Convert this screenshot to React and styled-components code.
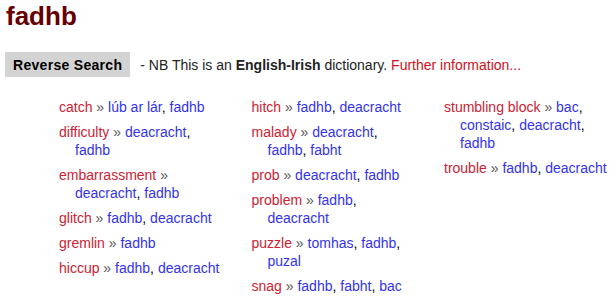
import React from "react";
import styled, { createGlobalStyle } from "styled-components";

const Global = createGlobalStyle`
  html, body { margin: 0; padding: 0; background: #fff; }
  body { font-family: "Liberation Sans", Arial, sans-serif; color: #000; }
`;

const Page = styled.div`
  padding: 0 6px;
`;

const Title = styled.h1`
  margin: 0;
  padding-top: 1px;
  font-size: 26px;
  line-height: 30px;
  font-weight: bold;
  color: #660000;
`;

const Bar = styled.div`
  display: flex;
  align-items: center;
  margin-top: 21px;
  margin-left: -1px;
  font-size: 14px;
`;

const Button = styled.button`
  font-family: "Liberation Sans", Arial, sans-serif;
  font-weight: bold;
  font-size: 14px;
  letter-spacing: 0.3px;
  background: #d3d3d3;
  color: #000;
  border: none;
  height: 25px;
  padding: 0 8px;
  margin-right: 10px;
`;

const Info = styled.span`
  color: #222;
`;

const InfoLink = styled.a`
  color: #cc1122;
  text-decoration: none;
`;

const Columns = styled.div`
  display: grid;
  grid-template-columns: repeat(3, 168px);
  column-gap: 24.5px;
  margin-top: 21px;
  margin-left: 53px;
  font-size: 14px;
  line-height: 18px;
`;

const List = styled.ul`
  list-style: none;
  margin: 0;
  padding: 0;
`;

const Entry = styled.li`
  padding-left: 16px;
  text-indent: -16px;
  margin-bottom: 7px;
`;

const Word = styled.a`
  color: #cc2233;
  text-decoration: none;
`;

const Sep = styled.span`
  color: #555;
`;

const Trans = styled.a`
  color: #3333ee;
  text-decoration: none;
`;

const columns = [
  [
    ["catch", ["lúb ar lár", "fadhb"]],
    ["difficulty", ["deacracht", "fadhb"]],
    ["embarrassment", ["deacracht", "fadhb"]],
    ["glitch", ["fadhb", "deacracht"]],
    ["gremlin", ["fadhb"]],
    ["hiccup", ["fadhb", "deacracht"]],
  ],
  [
    ["hitch", ["fadhb", "deacracht"]],
    ["malady", ["deacracht", "fadhb", "fabht"]],
    ["prob", ["deacracht", "fadhb"]],
    ["problem", ["fadhb", "deacracht"]],
    ["puzzle", ["tomhas", "fadhb", "puzal"]],
    ["snag", ["fadhb", "fabht", "bac"]],
  ],
  [
    ["stumbling block", ["bac", "constaic", "deacracht", "fadhb"]],
    ["trouble", ["fadhb", "deacracht"]],
  ],
];

export default function App() {
  return (
    <Page>
      <Global />
      <Title>fadhb</Title>
      <Bar>
        <Button>Reverse Search</Button>
        <Info>
          - NB This is an <b>English-Irish</b> dictionary.{" "}
          <InfoLink href="#">Further information...</InfoLink>
        </Info>
      </Bar>
      <Columns>
        {columns.map((col, i) => (
          <List key={i}>
            {col.map(([w, ts]) => (
              <Entry key={w}>
                <Word href="#">{w}</Word> <Sep>»</Sep>{" "}
                {ts.map((t, j) => (
                  <React.Fragment key={j}>
                    <Trans href="#">{t}</Trans>
                    {j < ts.length - 1 ? ", " : ""}
                  </React.Fragment>
                ))}
              </Entry>
            ))}
          </List>
        ))}
      </Columns>
    </Page>
  );
}
